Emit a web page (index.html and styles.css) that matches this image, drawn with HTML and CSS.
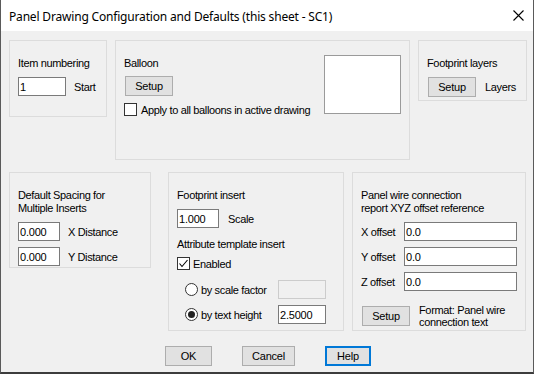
FILE: index.html
```html
<!DOCTYPE html>
<html>
<head>
<meta charset="utf-8">
<link rel="stylesheet" href="styles.css">
</head>
<body>
<div class="window">
  <div class="titlebar">
    <span class="title">Panel Drawing Configuration and Defaults (this sheet - SC1)</span>
    <svg class="close" width="11" height="11" viewBox="0 0 11 11"><path d="M0.5 0.5 L10.5 10.5 M10.5 0.5 L0.5 10.5" stroke="#000" stroke-width="1.1" fill="none"/></svg>
  </div>
  <div class="content">
    <div class="row top">
      <div class="group g1">
        <div class="lbl">Item numbering</div>
        <div class="line r1">
          <input class="tb w48" value="1">
          <span>Start</span>
        </div>
      </div>
      <div class="group g2">
        <div class="col">
          <div class="lbl">Balloon</div>
          <button class="btn setup b1">Setup</button>
          <div class="line chkline">
            <span class="chk"></span>
            <span>Apply to all balloons in active drawing</span>
          </div>
        </div>
        <div class="preview"></div>
      </div>
      <div class="group g3">
        <div class="lbl">Footprint layers</div>
        <div class="line r1 gap9">
          <button class="btn setup ml1">Setup</button>
          <span>Layers</span>
        </div>
      </div>
    </div>
    <div class="row bottom">
      <div class="group g4">
        <div class="lbl">Default Spacing for<br>Multiple Inserts</div>
        <div class="line r1">
          <input class="tb w42" value="0.000">
          <span>X Distance</span>
        </div>
        <div class="line r2">
          <input class="tb w42" value="0.000">
          <span>Y Distance</span>
        </div>
      </div>
      <div class="group g5">
        <div class="lbl">Footprint insert</div>
        <div class="line r1 gap9">
          <input class="tb w42" value="1.000">
          <span>Scale</span>
        </div>
        <div class="lbl attr">Attribute template insert</div>
        <div class="line en">
          <span class="chk checked"><svg width="11" height="11" viewBox="0 0 11 11"><path d="M1.5 5.5 L4 8.5 L9.5 2" stroke="#000" stroke-width="1.1" fill="none"/></svg></span>
          <span>Enabled</span>
        </div>
        <div class="line radrow rr1">
          <span class="radlbl"><span class="radio"></span><span>by scale factor</span></span>
          <input class="tb w48 dis" value="" disabled>
        </div>
        <div class="line radrow rr2">
          <span class="radlbl"><span class="radio on"></span><span>by text height</span></span>
          <input class="tb w48" value="2.5000">
        </div>
      </div>
      <div class="group g6">
        <div class="lbl">Panel wire connection<br>report XYZ offset reference</div>
        <div class="line r1 off">
          <span class="offlbl">X offset</span>
          <input class="tb w113" value="0.0">
        </div>
        <div class="line r2 off">
          <span class="offlbl">Y offset</span>
          <input class="tb w113" value="0.0">
        </div>
        <div class="line r2 off">
          <span class="offlbl">Z offset</span>
          <input class="tb w113" value="0.0">
        </div>
        <div class="line fmt gap9">
          <button class="btn setup ml1">Setup</button>
          <span class="fmttext">Format: Panel wire<br>connection text</span>
        </div>
      </div>
    </div>
    <div class="buttons">
      <button class="btn bok">OK</button>
      <button class="btn bcancel">Cancel</button>
      <button class="btn bhelp">Help</button>
    </div>
  </div>
</div>
</body>
</html>
```
FILE: styles.css
```css
html, body {
  margin: 0;
  padding: 0;
}
body {
  background: #f0f0f0;
  font-family: "Liberation Sans", Arial, sans-serif;
  font-size: 11px;
  letter-spacing: -0.35px;
  color: #000;
}
.window {
  width: 534px;
  height: 374px;
  box-sizing: border-box;
  border-left: 1px solid #5a5a5a;
  border-right: 1px solid #5a5a5a;
  border-bottom: 2px solid #3c3c3c;
  background: #f0f0f0;
  overflow: hidden;
}
.titlebar {
  height: 31px;
  background: #fff;
  display: flex;
  align-items: center;
}
.title {
  font-family: "Noto Sans", "Open Sans", sans-serif;
  font-size: 12px;
  letter-spacing: -0.18px;
  padding-left: 8px;
  padding-top: 1px;
}
.close {
  margin-left: auto;
  margin-right: 9px;
}
.content {
  padding: 9px 0 0 8px;
}
.row {
  display: flex;
  align-items: flex-start;
}
.top { gap: 8px; }
.bottom { margin-top: 12px; }
.group {
  box-sizing: border-box;
  border: 1px solid #dcdcdc;
  padding: 16px 8px 0 8px;
}
.g1 { width: 98px; height: 77px; }
.g2 { width: 295px; height: 120px; display: flex; align-items: flex-start; padding-top: 14px; }
.g2 .col { padding-top: 2px; }
.g3 { width: 109px; height: 61px; }
.g4 { width: 142px; height: 96px; }
.g5 { width: 176px; height: 159px; margin-left: 17px; }
.g6 { width: 174px; height: 159px; margin-left: 8px; }
.lbl {
  line-height: 13px;
  white-space: nowrap;
}
.line {
  display: flex;
  align-items: center;
  gap: 8px;
  white-space: nowrap;
}
.gap9 { gap: 9px; }
.r1 { margin-top: 7px; }
.r2 { margin-top: 6px; }
.tb {
  box-sizing: border-box;
  height: 19px;
  border: 1px solid #7a7a7a;
  background: #fff;
  font-family: "Liberation Sans", Arial, sans-serif;
  font-size: 11px;
  letter-spacing: -0.2px;
  color: #000;
  padding: 0 1px;
  margin: 0;
  outline: none;
}
.tb.dis {
  background: #f0f0f0;
  border-color: #cccccc;
}
.w48 { width: 48px; }
.w42 { width: 42px; }
.w113 { width: 113px; }
.btn {
  box-sizing: border-box;
  height: 20px;
  border: 1px solid #adadad;
  background: #e1e1e1;
  font-family: "Liberation Sans", Arial, sans-serif;
  font-size: 11px;
  letter-spacing: -0.2px;
  color: #000;
  padding: 0;
  margin: 0;
}
.setup { width: 48px; }
.b1 { display: block; margin-top: 6px; margin-left: 1px; }
.ml1 { margin-left: 1px; }
.chkline { margin-top: 7px; gap: 4px; }
.chk {
  box-sizing: border-box;
  width: 13px;
  height: 13px;
  border: 1px solid #333;
  background: #fff;
  display: inline-flex;
  align-items: center;
  justify-content: center;
  flex: none;
}
.preview {
  box-sizing: border-box;
  width: 77px;
  height: 59px;
  border: 1px solid #9a9a9a;
  background: #fff;
  margin-left: auto;
}
.attr { margin-top: 10px; }
.en { margin-top: 6px; gap: 3px; }
.radrow { gap: 0; padding-left: 8px; }
.rr1 { margin-top: 10px; }
.rr2 { margin-top: 6px; }
.radlbl {
  display: inline-flex;
  align-items: center;
  gap: 3px;
  width: 93px;
}
.radio {
  box-sizing: border-box;
  width: 13px;
  height: 13px;
  border: 1px solid #333;
  border-radius: 50%;
  background: #fff;
  display: inline-flex;
  align-items: center;
  justify-content: center;
  flex: none;
}
.radio.on::after {
  content: "";
  width: 7px;
  height: 7px;
  border-radius: 50%;
  background: #222;
}
.off { gap: 0; }
.offlbl { width: 43px; }
.fmt { margin-top: 13px; }
.fmttext { line-height: 12px; }
.buttons {
  display: flex;
  gap: 30px;
  margin-top: 15px;
  padding-left: 156px;
}
.bok { width: 47px; }
.bcancel { width: 53px; }
.bhelp { width: 46px; border: 2px solid #0078d7; }
```
